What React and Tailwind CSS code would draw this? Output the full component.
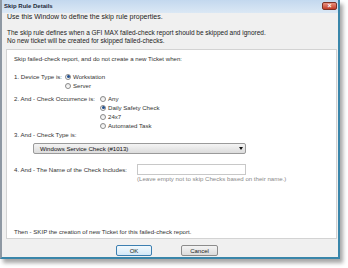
import React from 'react'

const Radio = ({ checked }) => (
  <span className="w-[6px] h-[6px] rounded-full border border-[#8a8a8a] bg-gradient-to-b from-[#e8e8e8] to-white flex items-center justify-center shrink-0">
    {checked && <span className="w-[3px] h-[3px] rounded-full bg-[#1f4f8f]"></span>}
  </span>
)

const Option = ({ checked, label }) => (
  <div className="h-[9px] flex items-center gap-[2px]">
    <Radio checked={checked} />
    <span>{label}</span>
  </div>
)

const App = () => {
  return (
    <div className="w-[348px] h-[268px] bg-white text-[#222]" style={{ fontFamily: '"Liberation Sans", Arial, sans-serif' }}>
      <div className="w-[340px] h-[259px] flex flex-col border-l-2 border-l-[#8e98a3] border-r-2 border-r-[#3a86aa] border-b-2 border-b-[#3a86aa] shadow-[3px_4px_4px_rgba(0,0,0,0.35)]">

        {/* Title bar */}
        <div className="h-[13px] shrink-0 flex items-center justify-between pl-[2px] pr-[1px] bg-gradient-to-b from-[#c3d8ee] to-[#dbe8f5]">
          <span className="text-[6px] font-bold text-[#1e2b3a]">Skip Rule Details</span>
          <span className="w-[15px] h-[8px] mb-[2px] rounded-[2px] bg-gradient-to-b from-[#e8907e] to-[#c23a26] border border-[#7e3226] flex items-center justify-center text-white text-[7px] font-bold leading-none">×</span>
        </div>

        {/* Client area */}
        <div className="flex-1 bg-[#f0f0f0] pl-[4px] pr-[1px] flex flex-col text-[6.5px] leading-[8px]">
          <p className="pl-[1px] text-[7px]">Use this Window to define the skip rule properties.</p>
          <p className="pl-[1px] mt-[8px]">The skip rule defines when a GFI MAX failed-check report should be skipped and ignored.</p>
          <p className="pl-[1px]">No new ticket will be created for skipped failed-checks.</p>

          {/* Panel */}
          <div className="mt-[4px] h-[190px] bg-white border border-[#d3d3d3] pl-[7px] flex flex-col text-[6.1px] leading-[8px] text-[#333]">
            <p className="mt-[5px]">Skip failed-check report, and do not create a new Ticket when:</p>

            <div className="mt-[9px] flex">
              <span className="w-[51px] h-[9px] flex items-center">1. Device Type is:</span>
              <div className="flex flex-col">
                <Option checked label="Workstation" />
                <Option label="Server" />
              </div>
            </div>

            <div className="mt-[4px] flex">
              <span className="w-[86px] h-[9px] flex items-center">2. And - Check Occurrence is:</span>
              <div className="flex flex-col">
                <Option label="Any" />
                <Option checked label="Daily Safety Check" />
                <Option label="24x7" />
                <Option label="Automated Task" />
              </div>
            </div>

            <p className="mt-[1px]">3. And - Check Type is:</p>
            <div className="mt-[4px] ml-[19px] w-[213px] h-[11px] rounded-[2px] border border-[#9a9a9a] bg-gradient-to-b from-[#f4f4f4] to-[#dcdcdc] flex items-center justify-between pl-[6px] pr-[2px]">
              <span className="text-[#111]">Windows Service Check (#1013)</span>
              <span className="w-0 h-0 border-l-[2px] border-r-[2px] border-t-[3px] border-l-transparent border-r-transparent border-t-[#111]"></span>
            </div>

            <div className="mt-[10px] flex items-center">
              <span className="w-[123px]">4. And - The Name of the Check Includes:</span>
              <div className="w-[109px] h-[11px] bg-white border border-[#c8c8c8]"></div>
            </div>
            <p className="ml-[123px] text-[#8a8a8a]">(Leave empty not to skip Checks based on their name.)</p>

            <p className="mt-auto mb-[2px]">Then - SKIP the creation of new Ticket for this failed-check report.</p>
          </div>

          {/* Buttons */}
          <div className="mt-[6px] flex pl-[110px] gap-[29px] text-[6px]">
            <button className="w-[36px] h-[11px] rounded-[2px] border border-[#3c7fb1] bg-gradient-to-b from-[#f2f9fd] to-[#d4e9f7] leading-none text-[#222]">OK</button>
            <button className="w-[37px] h-[11px] rounded-[2px] border border-[#8c8c8c] bg-gradient-to-b from-[#f4f4f4] to-[#dcdcdc] leading-none text-[#222]">Cancel</button>
          </div>
        </div>
      </div>
    </div>
  )
}

export default App
